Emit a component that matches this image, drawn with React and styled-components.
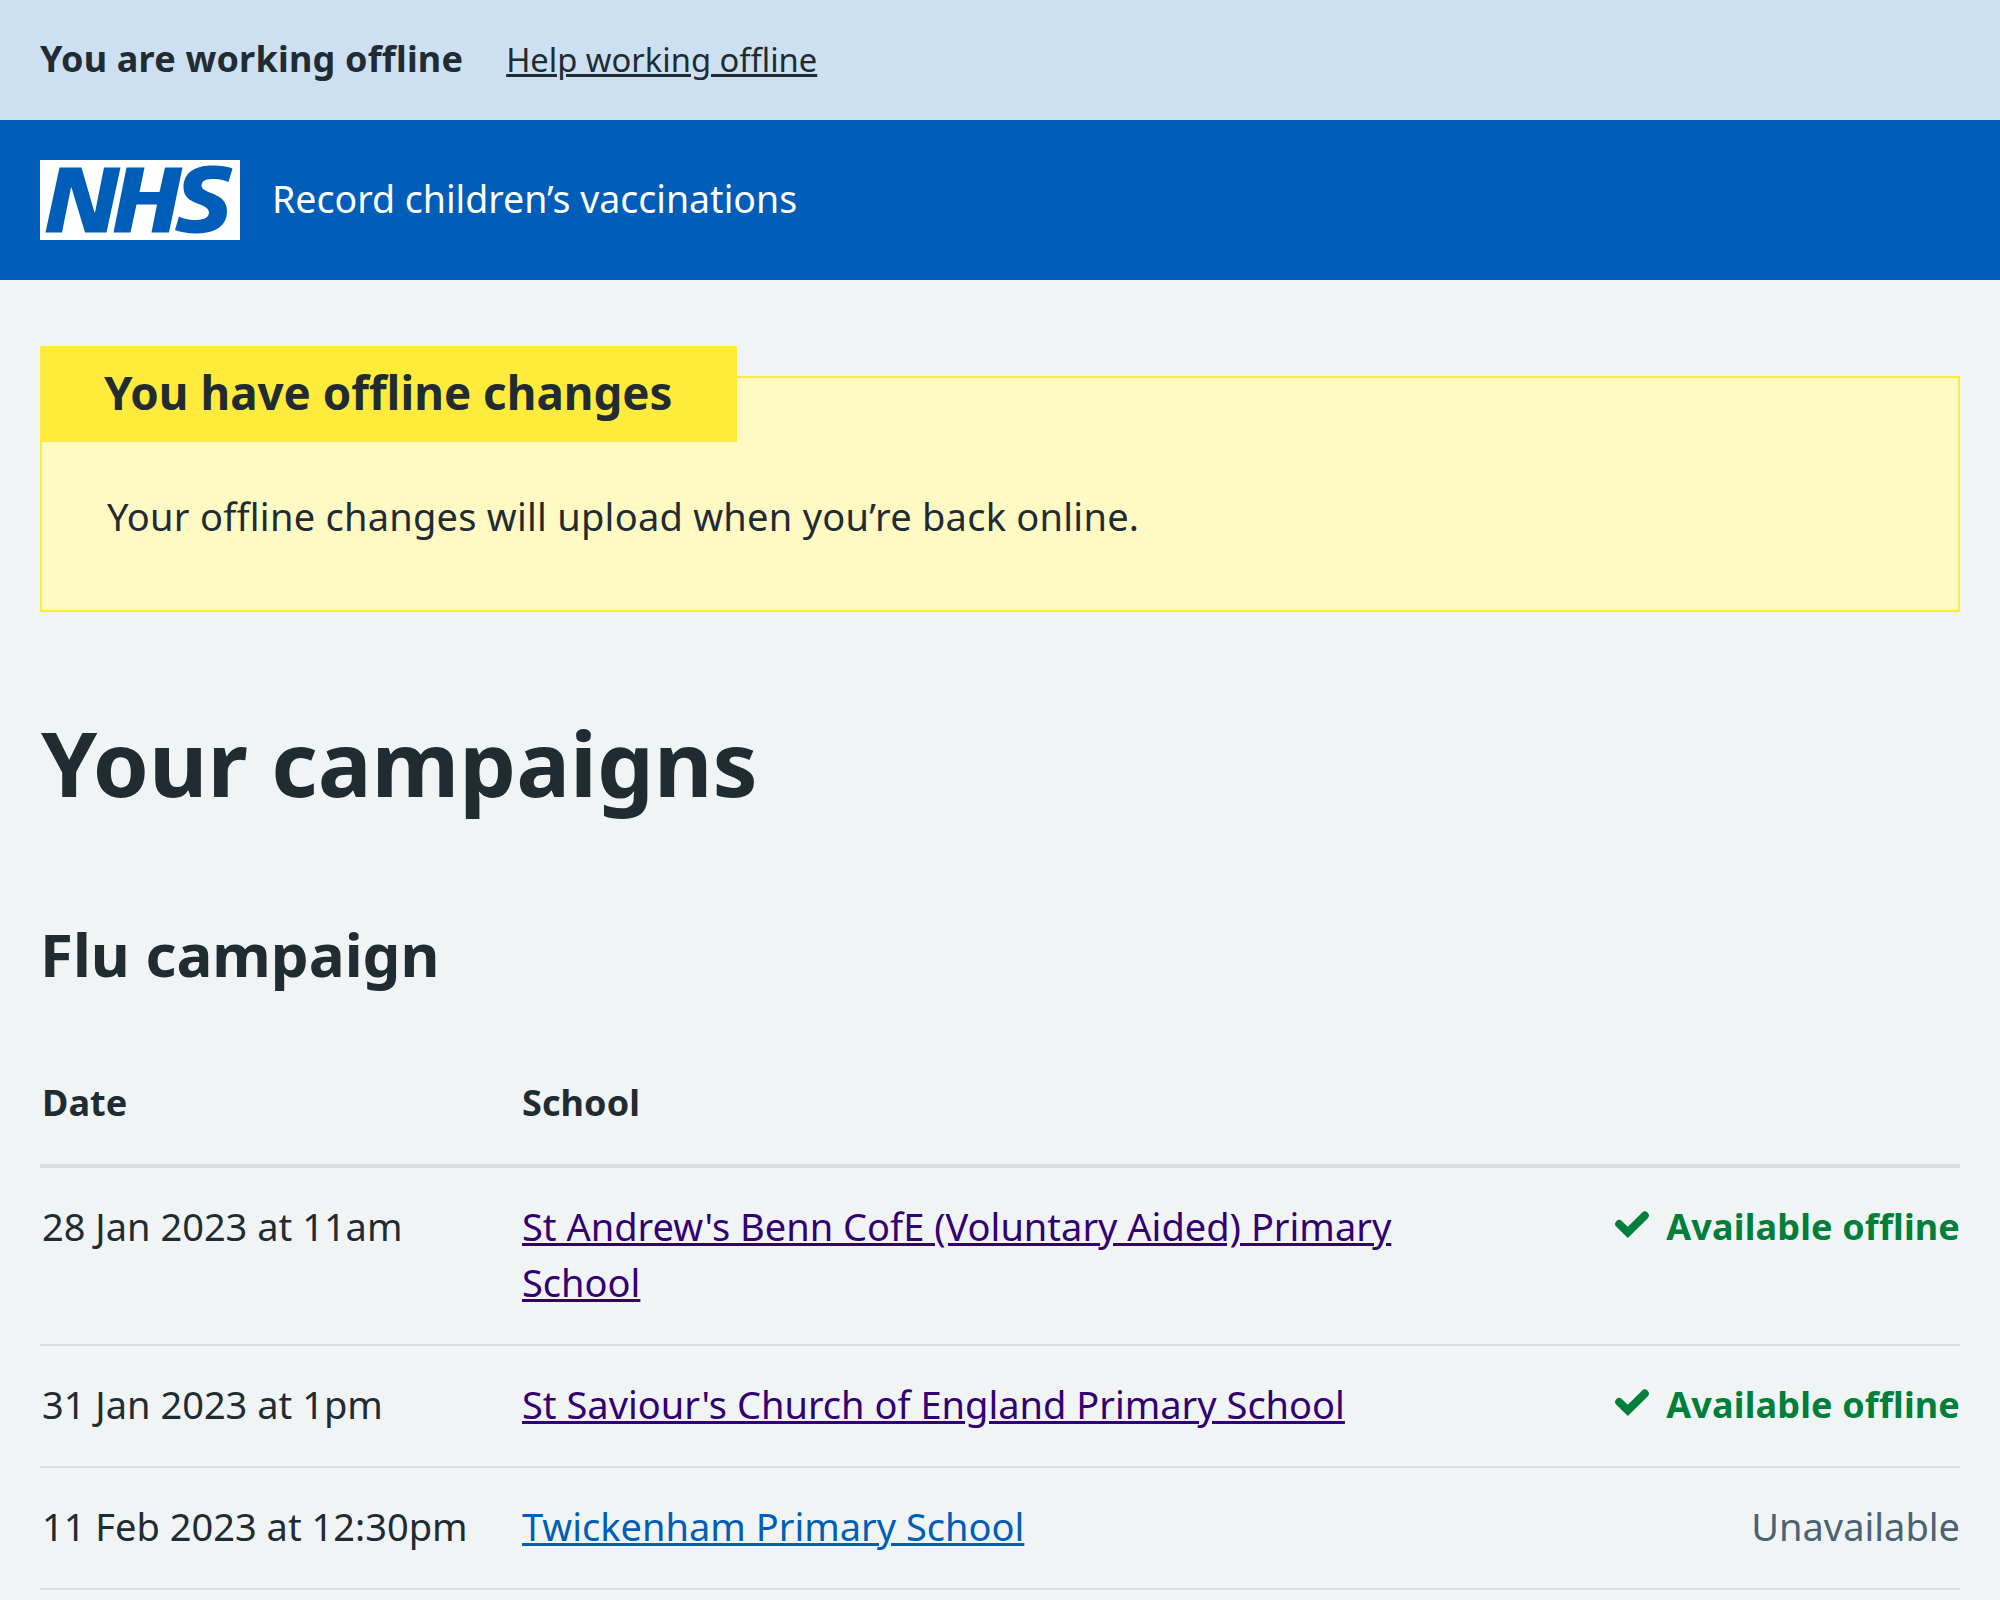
import React from 'react'
import styled, { createGlobalStyle } from 'styled-components'

const GlobalStyle = createGlobalStyle`
  html, body {
    margin: 0;
    background: #f0f4f5;
    color: #212b32;
    font-family: "Noto Sans", "Open Sans", Arial, sans-serif;
    font-size: 38px;
    line-height: 56px;
  }
`

const OfflineBar = styled.div`
  height: 120px;
  box-sizing: border-box;
  background: #cce0f2;
  display: flex;
  align-items: center;
  gap: 43px;
  padding: 0 40px;
`

const OfflineTitle = styled.strong`
  font-weight: 700;
  font-size: 36px;
  letter-spacing: 0.2px;
  margin-bottom: 2px;
`

const OfflineLink = styled.a`
  color: #212b32;
  text-decoration: underline;
  font-size: 32.7px;
`

const Header = styled.header`
  height: 160px;
  box-sizing: border-box;
  background: #005eb8;
  display: flex;
  align-items: center;
  gap: 32px;
  padding: 0 40px;
  color: #fff;
`

const Logo = styled.svg`
  width: 200px;
  height: 80px;
  display: block;
`

const ServiceName = styled.span`
  font-size: 37.5px;
  margin-bottom: 3px;
`

const Main = styled.main`
  padding: 96px 40px 0;
`

const Callout = styled.section`
  background: #fff9c4;
  border: 2px solid #ffeb3b;
  padding: 0 64px 66px;
`

const CalloutLabel = styled.h3`
  display: table;
  margin: -32px 0 0 -66px;
  padding: 14px 64px 18px;
  background: #ffeb3b;
  font-size: 45.7px;
  line-height: 64px;
  font-weight: 700;
`

const CalloutText = styled.p`
  margin: 46px 0 0 1px;
  letter-spacing: 0.25px;
`

const Title = styled.h1`
  margin: 95px 0 0 1px;
  font-size: 90px;
  line-height: 110px;
  font-weight: 700;
`

const CampaignTitle = styled.h2`
  margin: 99px 0 0;
  font-size: 60px;
  line-height: 76px;
  font-weight: 700;
`

const Table = styled.table`
  width: 100%;
  border-collapse: collapse;
  margin-top: 83px;
`

const HeadCell = styled.th`
  text-align: left;
  font-weight: 700;
  font-size: 36px;
  letter-spacing: 0.1px;
  padding: 0 0 33px;
  border-bottom: 4px solid #d8dde0;
`

const DateHeadCell = styled(HeadCell)`
  padding-left: 2px;
`

const Cell = styled.td`
  vertical-align: top;
  padding: 30px 0 34px;
  border-bottom: 2px solid #d8dde0;
`

const DateCell = styled(Cell)`
  width: 480px;
  padding-left: 2px;
`

const SchoolCell = styled(Cell)`
  width: 900px;
`

const SchoolLink = styled.a`
  color: ${p => (p.$visited ? '#330072' : '#005eb8')};
  text-decoration: underline;
`

const Status = styled.div`
  display: flex;
  justify-content: flex-end;
  margin: ${p => (p.$available ? '1px 0 -1px' : '0')};
  color: ${p => (p.$available ? '#007f3b' : '#4c6272')};
  font-weight: ${p => (p.$available ? 700 : 400)};
  font-size: ${p => (p.$available ? '36px' : '38px')};
  letter-spacing: ${p => (p.$available ? '0.15px' : '0')};
`

const Tick = styled.svg`
  width: 48px;
  height: 48px;
  margin: 1px 10px 0 0;
  fill: none;
  stroke: #007f3b;
  stroke-width: 4;
  stroke-linecap: round;
`

const rows = [
  { date: '28 Jan 2023 at 11am', school: "St Andrew's Benn CofE (Voluntary Aided) Primary School", available: true },
  { date: '31 Jan 2023 at 1pm', school: "St Saviour's Church of England Primary School", available: true },
  { date: '11 Feb 2023 at 12:30pm', school: 'Twickenham Primary School', available: false },
]

export default function App() {
  return (
    <>
      <GlobalStyle />
      <OfflineBar>
        <OfflineTitle>You are working offline</OfflineTitle>
        <OfflineLink href="#">Help working offline</OfflineLink>
      </OfflineBar>
      <Header>
        <Logo viewBox="0 0 40 16" aria-label="NHS">
          <path fill="#fff" d="M0 0h40v16H0z" />
          <path
            fill="#005eb8"
            d="M3.9 1.5h4.4l2.6 9h.1l1.8-9h3.3l-2.8 13H9l-2.7-9h-.1l-1.8 9H1.1M17.3 1.5h3.6l-1 4.9h4L25 1.5h3.5l-2.7 13h-3.5l1.1-5.6h-4.1l-1.2 5.6h-3.4M37.7 4.4c-.7-.3-1.6-.6-2.9-.6-1.4 0-2.5.2-2.5 1.3 0 1.8 5.1 1.2 5.1 5.1 0 3.6-3.3 4.5-6.4 4.5-1.3 0-2.9-.3-4-.7l.8-2.7c.7.4 2.1.7 3.2.7s2.8-.2 2.8-1.5c0-2.1-5.1-1.3-5.1-5 0-3.4 2.9-4.4 5.8-4.4 1.6 0 3.1.2 4 .6"
          />
        </Logo>
        <ServiceName>Record children’s vaccinations</ServiceName>
      </Header>
      <Main>
        <Callout>
          <CalloutLabel>You have offline changes</CalloutLabel>
          <CalloutText>Your offline changes will upload when you’re back online.</CalloutText>
        </Callout>
        <Title>Your campaigns</Title>
        <CampaignTitle>Flu campaign</CampaignTitle>
        <Table>
          <thead>
            <tr>
              <DateHeadCell>Date</DateHeadCell>
              <HeadCell>School</HeadCell>
              <HeadCell />
            </tr>
          </thead>
          <tbody>
            {rows.map(row => (
              <tr key={row.date}>
                <DateCell>{row.date}</DateCell>
                <SchoolCell>
                  <SchoolLink href="#" $visited={row.available}>{row.school}</SchoolLink>
                </SchoolCell>
                <Cell>
                  <Status $available={row.available}>
                    {row.available && (
                      <Tick viewBox="0 0 24 24">
                        <path d="M18.4 7.8l-8.5 8.4L5.6 12" />
                      </Tick>
                    )}
                    {row.available ? 'Available offline' : 'Unavailable'}
                  </Status>
                </Cell>
              </tr>
            ))}
          </tbody>
        </Table>
      </Main>
    </>
  )
}
